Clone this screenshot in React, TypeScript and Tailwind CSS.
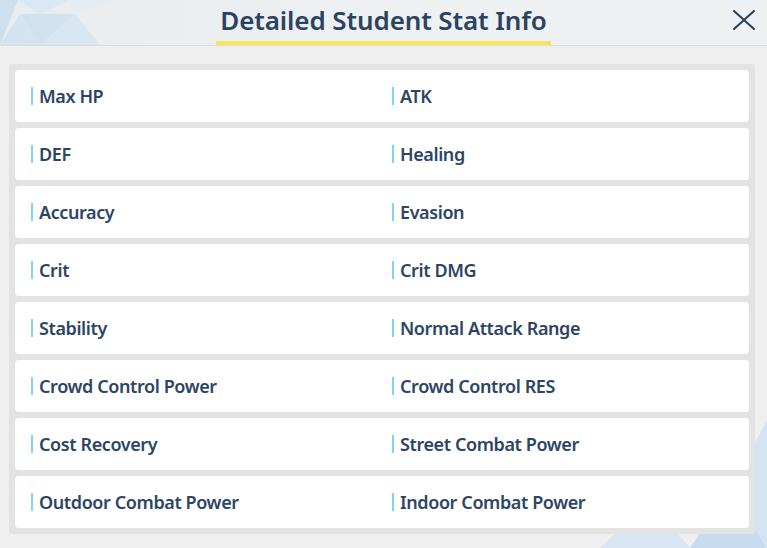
const stats: [string, string][] = [
  ["Max HP", "ATK"],
  ["DEF", "Healing"],
  ["Accuracy", "Evasion"],
  ["Crit", "Crit DMG"],
  ["Stability", "Normal Attack Range"],
  ["Crowd Control Power", "Crowd Control RES"],
  ["Cost Recovery", "Street Combat Power"],
  ["Outdoor Combat Power", "Indoor Combat Power"],
];

function StatLabel({ name }: { name: string }) {
  return (
    <div className="flex items-center gap-[6px]">
      <span className="w-[2px] h-[18px] bg-[#7fd3f5]" />
      <span className="text-[18px] font-semibold tracking-[-0.4px] text-[#2d4564]">{name}</span>
    </div>
  );
}

export default function App() {
  return (
    <div className="relative w-[767px] h-[548px] overflow-hidden bg-[#efefef] font-['Noto_Sans',sans-serif]">
      {/* background pattern */}
      <svg className="absolute inset-0" width="767" height="548" viewBox="0 0 767 548">
        <polygon points="0,0 18,0 0,45" fill="#c5d9e8" />
        <polygon points="18,0 70,0 40,14" fill="#d3e6f5" />
        <polygon points="0,45 20,14 40,45" fill="#c9e0f2" />
        <polygon points="20,14 75,14 40,45" fill="#c3daee" />
        <polygon points="75,14 40,45 100,45" fill="#d0e2f0" />
        <polygon points="70,0 110,0 75,14" fill="#e0ecf6" />
        <polygon points="600,548 650,500 690,548" fill="#d7e6f2" />
        <polygon points="690,548 730,490 767,548" fill="#c7dcee" />
        <polygon points="730,490 767,420 767,548" fill="#d3e4f2" />
        <polygon points="650,500 700,460 730,490" fill="#e2edf6" />
      </svg>

      <header className="relative h-[46px] border-b border-[#dadde0] bg-gradient-to-r from-[#dde9f3]/40 via-[#eef1f3]/80 to-[#eef1f3] flex items-start justify-center">
        <div className="relative pt-[3px] px-[4px]">
          <h1 className="text-[26px] leading-[34px] font-semibold text-[#2b4362] tracking-[-0.1px]">
            Detailed Student Stat Info
          </h1>
          <div className="absolute left-0 right-0 top-[41px] h-[4px] bg-[#f7e65a]" />
        </div>
        <button className="absolute right-[12px] top-[10px] text-[#2a3f5c]">
          <svg width="22" height="20" viewBox="0 0 22 20" fill="none" stroke="currentColor" strokeWidth="2" strokeLinecap="round">
            <path d="M1 1 L21 19 M21 1 L1 19" />
          </svg>
        </button>
      </header>

      <main className="relative px-[9px] pt-[18px]">
        <div className="bg-[#e3e3e1] p-[6px] rounded-[3px] flex flex-col gap-[6px] w-[746px]">
          {stats.map(([a, b]) => (
            <div
              key={a}
              className="h-[52px] bg-white rounded-[4px] grid grid-cols-[361px_1fr] items-center pl-[16px]"
            >
              <StatLabel name={a} />
              <StatLabel name={b} />
            </div>
          ))}
        </div>
      </main>
    </div>
  );
}
